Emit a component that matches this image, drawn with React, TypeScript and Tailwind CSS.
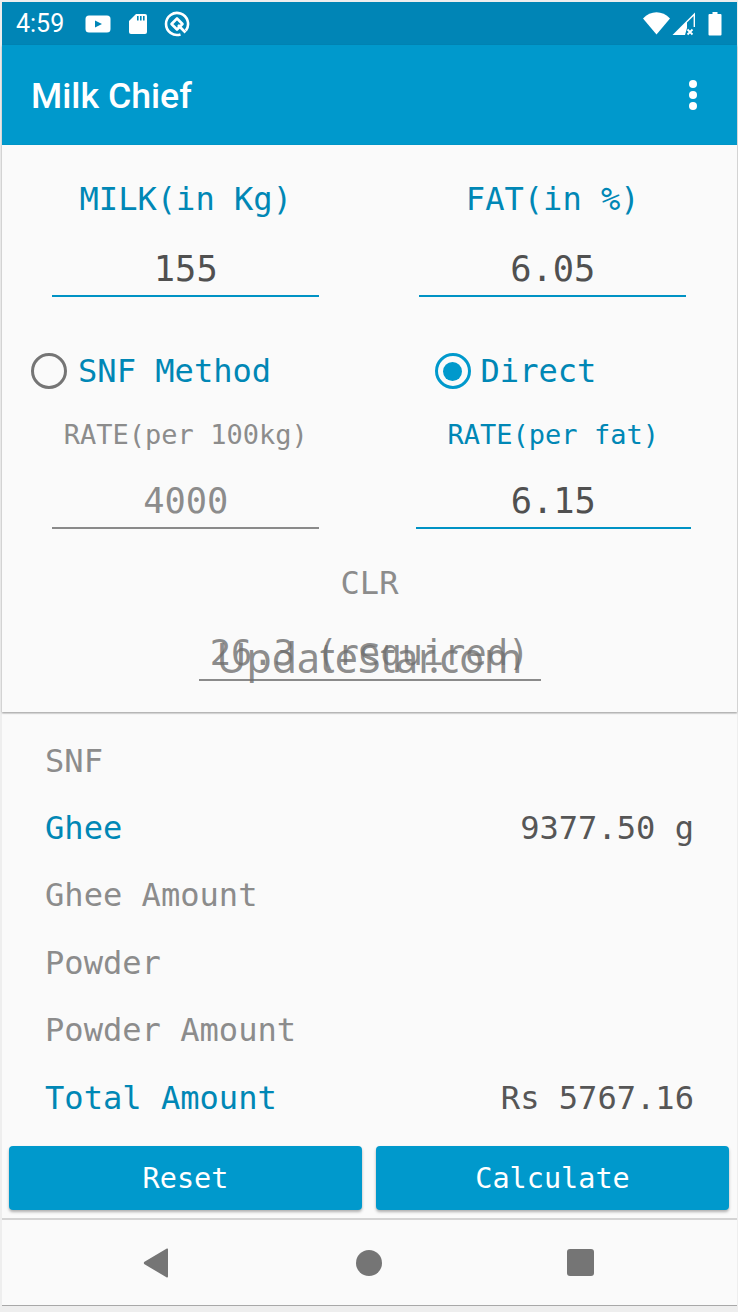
const MONO = "font-['DejaVu_Sans_Mono',monospace]";

function StatusIcons() {
  return (
    <div className="flex items-center">
      <svg width="26" height="18" viewBox="0 0 26 18" className="ml-[21px]">
        <rect width="25" height="17" x="0.5" y="0.5" rx="3.5" fill="#fff" />
        <path d="M10 5.5 L17 9 L10 12.5 Z" fill="#0085b6" />
      </svg>
      <svg width="20" height="22" viewBox="0 0 20 22" className="ml-[17px]">
        <path d="M8 1 H17 a2 2 0 0 1 2 2 V19 a2 2 0 0 1 -2 2 H3 a2 2 0 0 1 -2 -2 V8 Z" fill="#fff" />
        <path d="M9 3h1.6v4.5H9zM12 3h1.6v4.5H12zM15 3h1.6v4.5H15z" fill="#0085b6" />
      </svg>
      <svg width="26" height="26" viewBox="0 0 26 26" className="ml-[16px]" fill="none" stroke="#fff">
        <path d="M16.5 23.4 A11 11 0 1 1 21.8 19.6" strokeWidth="2.6" />
        <path d="M13 7.5 L18.5 13 L13 18.5 L7.5 13 Z" strokeWidth="2.6" strokeLinejoin="round" />
        <path d="M14 14 L21.5 21.5" strokeWidth="2.6" />
      </svg>
    </div>
  );
}

function SystemIcons() {
  return (
    <div className="flex items-center">
      <svg width="27" height="23" viewBox="0 0 27 23">
        <path d="M0 6.5 C7.5 -1.8 19.5 -1.8 27 6.5 L13.5 22.5 Z" fill="#fff" />
      </svg>
      <svg width="24" height="24" viewBox="0 0 24 24" className="ml-[2px]">
        <path d="M0.5 23 L23 0.5 V15 H21.6 V4 L15 10.6 V16 L13 23 Z" fill="#fff" />
        <path d="M15.5 17.5 L20.5 22.5 M20.5 17.5 L15.5 22.5" stroke="#fff" strokeWidth="1.8" />
      </svg>
      <svg width="14" height="24" viewBox="0 0 14 24" className="ml-[12px]">
        <path d="M4.5 0 H9.5 V2 H12.5 a1 1 0 0 1 1 1 V22.5 a1 1 0 0 1 -1 1 H1.5 a1 1 0 0 1 -1 -1 V3 a1 1 0 0 1 1 -1 H4.5 Z" fill="#fff" />
      </svg>
    </div>
  );
}

function Field({ value, muted, accent, className }: { value: string; muted?: boolean; accent?: boolean; className: string }) {
  return (
    <div
      className={`flex h-[56px] items-center justify-center border-b-2 pt-[2px] text-[35.4px] leading-none ${
        accent ? 'border-[#0092c4]' : 'border-[#8a8a8a]'
      } ${muted ? 'text-[#8c8c8c]' : 'text-[#505050]'} ${className}`}
    >
      {value}
    </div>
  );
}

function ResultRow({ label, value, accent }: { label: string; value?: string; accent?: boolean }) {
  return (
    <div className="flex h-[67.4px] items-center justify-between">
      <span className={accent ? 'text-[#0087b5]' : 'text-[#8c8c8c]'}>{label}</span>
      {value && <span className="text-[#565656]">{value}</span>}
    </div>
  );
}

export default function App() {
  return (
    <div className={`flex h-[1312px] w-[738px] flex-col overflow-hidden bg-[#eeeeee] pt-[2px] pb-[6px] pl-[2px] pr-px text-[32.1px] ${MONO}`}>
      <div className="flex h-[43px] shrink-0 items-center justify-between bg-[#0085b6] pl-[14px] pr-[15px] text-white">
        <div className="flex items-center">
          <span className="font-['Roboto',sans-serif] text-[25px]">4:59</span>
          <StatusIcons />
        </div>
        <SystemIcons />
      </div>
      <div className="flex h-[100px] shrink-0 items-center justify-between bg-[#0099cc] pt-[3px] pl-[29px] pr-[40px] shadow-[0_1px_2px_rgba(0,0,0,0.3)]">
        <span className="font-['Roboto',sans-serif] text-[35.7px] font-medium text-white">Milk Chief</span>
        <div className="flex flex-col gap-[3px] pb-[3px]">
          <span className="size-[8px] rounded-full bg-white" />
          <span className="size-[8px] rounded-full bg-white" />
          <span className="size-[8px] rounded-full bg-white" />
        </div>
      </div>

      <div className="relative h-[567px] shrink-0 bg-[#fafafa] shadow-[0_1px_2px_rgba(0,0,0,0.35)]">
        <div className="grid grid-cols-2 pt-[32px] text-[#0087b5]">
          <div className="flex flex-col items-center">
            <div className="h-[44px] leading-[44px]">MILK(in Kg)</div>
            <Field value="155" className="mt-[20px] w-[267px]" accent />
          </div>
          <div className="flex flex-col items-center pr-[1px]">
            <div className="h-[44px] leading-[44px]">FAT(in %)</div>
            <Field value="6.05" className="mt-[20px] w-[267px]" accent />
          </div>

          <div className="flex flex-col">
            <div className="mt-[54px] flex h-[40px] items-center pl-[29px]">
              <span className="size-[36px] rounded-full border-[3.5px] border-[#757575]" />
              <span className="ml-[11px]">SNF Method</span>
            </div>
            <div className="mt-[24px] h-[40px] text-center text-[27px] leading-[40px] text-[#8c8c8c]">RATE(per 100kg)</div>
            <Field value="4000" muted className="mx-auto mt-[18px] w-[267px]" />
          </div>
          <div className="flex flex-col">
            <div className="mt-[54px] flex h-[40px] items-center pl-[65px]">
              <span className="flex size-[36px] items-center justify-center rounded-full border-[3.5px] border-[#0099cc]">
                <span className="size-[19px] rounded-full bg-[#0099cc]" />
              </span>
              <span className="ml-[10px]">Direct</span>
            </div>
            <div className="mt-[24px] h-[40px] text-center text-[27px] leading-[40px]">RATE(per fat)</div>
            <Field value="6.15" accent className="mx-auto mt-[18px] w-[275px]" />
          </div>
        </div>

        <div className="mt-[32px] flex flex-col items-center">
          <div className="h-[44px] leading-[44px] text-[#8c8c8c]">CLR</div>
          <Field value="26.3 (required)" muted className="mt-[20px] w-[342px]" />
        </div>

        <div className="absolute top-[484px] left-0 w-full text-center font-['Noto_Sans',sans-serif] text-[41px] leading-[56px] text-[#6f6f6f]/80">
          UpdateStar.com
        </div>
      </div>

      <div className="mt-[2px] flex min-h-0 flex-1 flex-col bg-[#fafafa]">
        <div className="flex-1 pt-[13px] pr-[43px] pl-[43px]">
          <ResultRow label="SNF" />
          <ResultRow label="Ghee" value="9377.50 g" accent />
          <ResultRow label="Ghee Amount" />
          <ResultRow label="Powder" />
          <ResultRow label="Powder Amount" />
          <ResultRow label="Total Amount" value="Rs 5767.16" accent />
        </div>
        <div className="flex gap-[14px] pr-2 pb-[8px] pl-[7px] text-[28.5px] text-white">
          <button className="flex h-[64px] flex-1 items-center justify-center rounded-[4px] bg-[#0099cc] pt-[2px] shadow-[0_2px_3px_rgba(0,0,0,0.3)]">Reset</button>
          <button className="flex h-[64px] flex-1 items-center justify-center rounded-[4px] bg-[#0099cc] pt-[2px] shadow-[0_2px_3px_rgba(0,0,0,0.3)]">Calculate</button>
        </div>
        <div className="h-[2px] bg-[#d4d4d4]" />
        <div className="flex h-[86px] items-center border-b border-[#a8a8a8]">
          <svg width="26" height="30" viewBox="0 0 26 30" className="ml-[141px]">
            <path d="M25 1.5 V28.5 a1 1 0 0 1 -1.6 .8 L1.5 16.2 a1.4 1.4 0 0 1 0 -2.4 L23.4 .7 A1 1 0 0 1 25 1.5 Z" fill="#757575" />
          </svg>
          <span className="ml-[187px] size-[26px] rounded-full bg-[#757575]" />
          <span className="ml-[185px] size-[27px] rounded-[3px] bg-[#757575]" />
        </div>
      </div>
    </div>
  );
}
